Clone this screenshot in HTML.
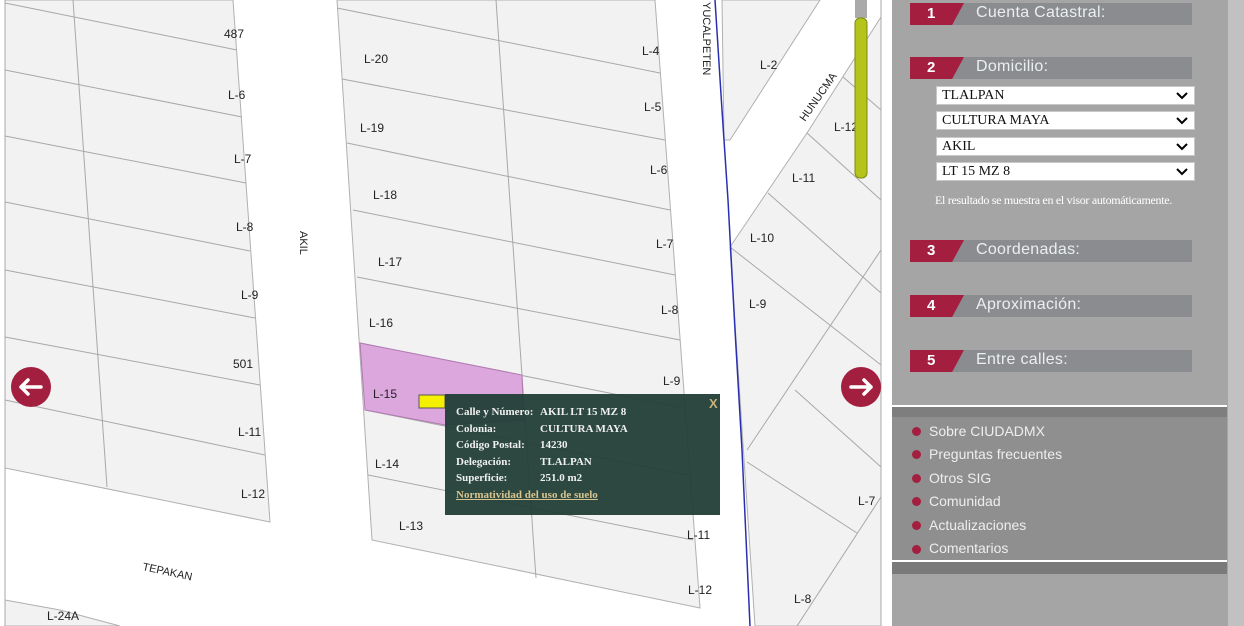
<!DOCTYPE html>
<html><head><meta charset="utf-8"><style>
*{margin:0;padding:0;box-sizing:border-box}
body{width:1244px;height:626px;overflow:hidden;background:#fff;font-family:"Liberation Sans",sans-serif;position:relative}
#map{position:absolute;left:0;top:0}
.panel{position:absolute;left:892px;top:0;width:336px;height:626px;background:#a5a5a5}
.strip{position:absolute;left:1228px;top:0;width:16px;height:626px;background:#c2c1c2}
.hd{position:absolute;left:910px;width:282px;height:22px;background:#8a8c8f}
.hd .r{position:absolute;left:0;top:0;width:54px;height:22px;background:#a41e40;clip-path:polygon(0 0,100% 0,78% 100%,0 100%)}
.hd .n{position:absolute;left:17px;top:2px;color:#fff;font-weight:bold;font-size:15px}
.hd .t{position:absolute;left:66px;top:1px;color:#eceff0;font-size:16px;letter-spacing:.3px}
.sel{position:absolute;left:936px;width:259px;height:19px;background:#fff;border:1px solid #c8c8c8;font-family:"Liberation Serif",serif;font-size:14px;padding:1px 0 0 5px;color:#111}
.sel svg{position:absolute;right:6px;top:5px}
.note{position:absolute;left:935px;top:193px;font-family:"Liberation Serif",serif;font-size:12px;color:#fff;letter-spacing:-.3px}
.menu{position:absolute;left:892px;top:417px;width:335px;height:144px;background:#8f8f8f}
.mi{position:absolute;left:929px;color:#eee;font-size:14px}
.dot{position:absolute;left:912px;width:9px;height:9px;border-radius:50%;background:#a41e40}
.pop{position:absolute;left:445px;top:394px;width:275px;height:121px;background:rgba(33,62,54,.95);font-family:"Liberation Serif",serif;font-weight:bold;font-size:11px;color:#f0f0f0}
.pop div{position:absolute;left:11px}
.pop span{position:absolute;left:84px;white-space:nowrap}
</style></head><body>
<svg id="map" width="892" height="626" viewBox="0 0 892 626">
<g fill="#f2f2f2" stroke="#b0b0b0" stroke-width="1">
<polygon points="5,0 233,0 270,522 5,468"/>
<polygon points="337,0 655,0 700,608 372,540"/>
<polygon points="722,0 820,0 730,140 724,140"/>
<polygon points="730,247 807,133 881,17 881,626 755,626"/>
<polygon points="5,600 60,610 120,626 5,626"/>
</g>
<g stroke="#a8a8a8" fill="none" stroke-width="1">
<line x1="73" y1="0" x2="107" y2="487"/>
<line x1="5" y1="3" x2="237" y2="50"/><line x1="5" y1="70" x2="242" y2="117"/><line x1="5" y1="136" x2="246" y2="183"/><line x1="5" y1="202" x2="250" y2="251"/><line x1="5" y1="270" x2="255" y2="318"/><line x1="5" y1="337" x2="260" y2="385"/><line x1="5" y1="400" x2="265" y2="455"/>
<line x1="496" y1="0" x2="536" y2="578"/>
<line x1="337" y1="8" x2="660" y2="73"/><line x1="342" y1="79" x2="665" y2="140"/><line x1="347" y1="143" x2="670" y2="210"/><line x1="353" y1="210" x2="675" y2="275"/><line x1="357" y1="277" x2="680" y2="340"/><line x1="360" y1="343" x2="684" y2="408"/><line x1="365" y1="410" x2="688" y2="475"/><line x1="368" y1="475" x2="693" y2="540"/>
<line x1="843" y1="77" x2="881" y2="110"/><line x1="807" y1="133" x2="881" y2="200"/>
<line x1="768" y1="193" x2="881" y2="293"/><line x1="730" y1="247" x2="881" y2="365"/>
<line x1="881" y1="250" x2="747" y2="450"/><line x1="795" y1="390" x2="881" y2="467"/>
<line x1="747" y1="462" x2="857" y2="533"/><line x1="881" y1="497" x2="797" y2="626"/>
<line x1="881" y1="0" x2="881" y2="626"/>
<line x1="5" y1="0" x2="5" y2="626"/>
</g>
<polygon points="360,343 522,375 524,420 445,425 365,410" fill="#dca7dd" stroke="#b07ab0"/>
<polyline points="715,0 722,110 728,200 735,330 742,450 750,626" stroke="#2a2fb0" stroke-width="1.5" fill="none"/>
<g font-family="Liberation Sans,sans-serif" font-size="12" fill="#222">
<text x="224" y="38">487</text><text x="228" y="99">L-6</text><text x="234" y="163">L-7</text><text x="236" y="231">L-8</text><text x="241" y="299">L-9</text><text x="233" y="368">501</text><text x="238" y="436">L-11</text><text x="241" y="498">L-12</text>
<text x="364" y="63">L-20</text><text x="360" y="132">L-19</text><text x="373" y="199">L-18</text><text x="378" y="266">L-17</text><text x="369" y="327">L-16</text><text x="373" y="398">L-15</text><text x="375" y="468">L-14</text><text x="399" y="530">L-13</text>
<text x="642" y="55">L-4</text><text x="644" y="111">L-5</text><text x="650" y="174">L-6</text><text x="656" y="248">L-7</text><text x="661" y="314">L-8</text><text x="663" y="385">L-9</text><text x="687" y="539">L-11</text><text x="688" y="594">L-12</text>
<text x="760" y="69">L-2</text><text x="834" y="131">L-12</text><text x="792" y="182">L-11</text><text x="750" y="242">L-10</text><text x="749" y="308">L-9</text><text x="858" y="505">L-7</text><text x="794" y="603">L-8</text><text x="47" y="620">L-24A</text>
<text x="300" y="231" transform="rotate(90 300 231)" font-size="11">AKIL</text>
<text x="703" y="2" transform="rotate(90 703 2)" font-size="11">YUCALPETEN</text>
<text x="805" y="122" transform="rotate(-55 805 122)" font-size="11">HUNUCMA</text>
<text x="142" y="570" transform="rotate(12 142 570)" font-size="11">TEPAKAN</text>
</g>
<rect x="855" y="0" width="12" height="18" fill="#aaa"/>
<rect x="855" y="18" width="12" height="160" rx="5" fill="#b5c41a" stroke="#7d8a10"/>
<circle cx="31" cy="387" r="20" fill="#a31f3f"/>
<path d="M21,387h20M21,387l7,-7M21,387l7,7" stroke="#fff" stroke-width="3.5" fill="none" stroke-linecap="round"/>
<circle cx="861" cy="387" r="20" fill="#a31f3f"/>
<path d="M851,387h20M871,387l-7,-7M871,387l-7,7" stroke="#fff" stroke-width="3.5" fill="none" stroke-linecap="round"/>
<rect x="419" y="395" width="26" height="13" fill="#f5f000" stroke="#555"/>
</svg>
<div class="pop">
<div style="top:12px">Calle y Número:<span>AKIL LT 15 MZ 8</span></div>
<div style="top:29px">Colonia:<span>CULTURA MAYA</span></div>
<div style="top:45px">Código Postal:<span>14230</span></div>
<div style="top:62px">Delegación:<span>TLALPAN</span></div>
<div style="top:78px">Superficie:<span>251.0 m2</span></div>
<div style="top:95px;color:#d9c48f;text-decoration:underline">Normatividad del uso de suelo</div>
<div style="left:264px;top:2px;color:#c9b27a;font-family:'Liberation Sans';font-size:13px">X</div>
</div>
<div class="panel"></div><div class="strip"></div>
<div class="hd" style="top:3px"><div class="r"></div><div class="n">1</div><div class="t">Cuenta Catastral:</div></div>
<div class="hd" style="top:57px"><div class="r"></div><div class="n">2</div><div class="t">Domicilio:</div></div>
<div class="sel" style="top:86px">TLALPAN<svg width="12" height="8"><path d="M1,1l5,5l5,-5" stroke="#000" stroke-width="2" fill="none"/></svg></div>
<div class="sel" style="top:111px">CULTURA MAYA<svg width="12" height="8"><path d="M1,1l5,5l5,-5" stroke="#000" stroke-width="2" fill="none"/></svg></div>
<div class="sel" style="top:137px">AKIL<svg width="12" height="8"><path d="M1,1l5,5l5,-5" stroke="#000" stroke-width="2" fill="none"/></svg></div>
<div class="sel" style="top:162px">LT 15 MZ 8<svg width="12" height="8"><path d="M1,1l5,5l5,-5" stroke="#000" stroke-width="2" fill="none"/></svg></div>
<div class="note">El resultado se muestra en el visor automáticamente.</div>
<div class="hd" style="top:240px"><div class="r"></div><div class="n">3</div><div class="t">Coordenadas:</div></div>
<div class="hd" style="top:295px"><div class="r"></div><div class="n">4</div><div class="t">Aproximación:</div></div>
<div class="hd" style="top:350px"><div class="r"></div><div class="n">5</div><div class="t">Entre calles:</div></div>
<div style="position:absolute;left:892px;top:405px;width:335px;height:2px;background:#fff"></div>
<div style="position:absolute;left:892px;top:407px;width:335px;height:10px;background:#7e7e7e"></div>
<div class="menu"></div>
<div style="position:absolute;left:892px;top:560px;width:335px;height:2px;background:#fff"></div>
<div style="position:absolute;left:892px;top:562px;width:335px;height:12px;background:#7a7a7a"></div>
<div class="dot" style="top:427px"></div><div class="mi" style="top:423px">Sobre CIUDADMX</div>
<div class="dot" style="top:450px"></div><div class="mi" style="top:446px">Preguntas frecuentes</div>
<div class="dot" style="top:474px"></div><div class="mi" style="top:470px">Otros SIG</div>
<div class="dot" style="top:497px"></div><div class="mi" style="top:493px">Comunidad</div>
<div class="dot" style="top:521px"></div><div class="mi" style="top:517px">Actualizaciones</div>
<div class="dot" style="top:545px"></div><div class="mi" style="top:540px">Comentarios</div>
</body></html>
